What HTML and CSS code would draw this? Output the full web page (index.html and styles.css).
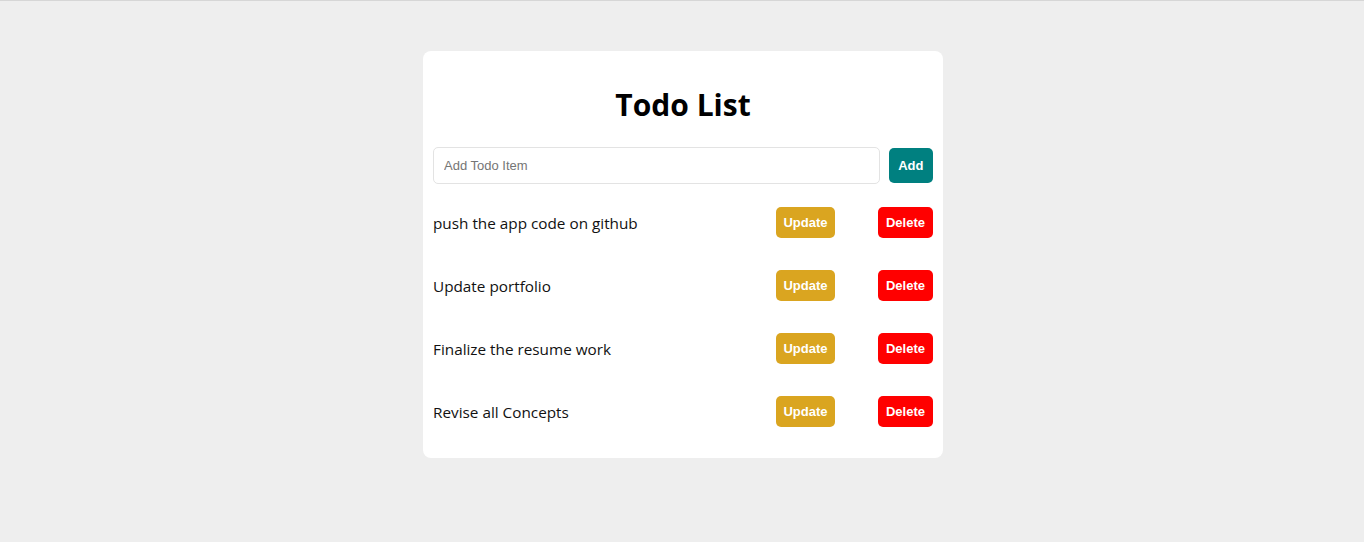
FILE: index.html
```html
<!DOCTYPE html>
<html>
<head>
<meta charset="utf-8">
<link rel="stylesheet" href="styles.css">
</head>
<body>
<div class="page">
  <div class="card">
    <h1 class="title">Todo List</h1>
    <div class="add-row">
      <input class="add-input" type="text" placeholder="Add Todo Item">
      <button class="btn btn-add">Add</button>
    </div>
    <ul class="list">
      <li class="item"><span class="item-text">push the app code on github</span><div class="actions"><button class="btn btn-update">Update</button><button class="btn btn-delete">Delete</button></div></li>
      <li class="item"><span class="item-text">Update portfolio</span><div class="actions"><button class="btn btn-update">Update</button><button class="btn btn-delete">Delete</button></div></li>
      <li class="item"><span class="item-text">Finalize the resume work</span><div class="actions"><button class="btn btn-update">Update</button><button class="btn btn-delete">Delete</button></div></li>
      <li class="item"><span class="item-text">Revise all Concepts</span><div class="actions"><button class="btn btn-update">Update</button><button class="btn btn-delete">Delete</button></div></li>
    </ul>
  </div>
</div>
</body>
</html>
```
FILE: styles.css
```css
html, body {
  margin: 0;
  padding: 0;
}
body {
  background: #eeeeee;
  border-top: 1px solid #d6d6d6;
  font-family: "Open Sans", "Noto Sans", sans-serif;
  height: 541px;
}
.page {
  display: flex;
  justify-content: center;
  padding: 50px 0 0 2px;
}
.card {
  width: 500px;
  background: #ffffff;
  border-radius: 8px;
  padding: 30px 10px 15px;
}
.title {
  margin: 0 0 19px;
  text-align: center;
  font-size: 30px;
  font-weight: 700;
  line-height: 46px;
  color: #000;
  padding-top: 1px;
}
.add-row {
  display: flex;
  align-items: center;
  gap: 9px;
}
.add-input {
  flex: 1;
  height: 37px;
  box-sizing: border-box;
  border: 1px solid #e3e3e3;
  border-radius: 5px;
  padding: 0 10px;
  font-family: "Liberation Sans", Arial, sans-serif;
  font-size: 13px;
  outline: none;
}
.add-input::placeholder {
  color: #757575;
}
.btn {
  border: none;
  border-radius: 5px;
  color: #fff;
  font-family: "Liberation Sans", Arial, sans-serif;
  font-size: 13px;
  font-weight: 700;
  line-height: 15px;
  padding: 8px 7.5px;
  cursor: pointer;
}
.btn-add {
  background: #008080;
  padding: 10px 9.5px;
}
.btn-update {
  background: #daa520;
}
.btn-delete {
  background: #ff0000;
  padding: 8px 8px;
}
.list {
  list-style: none;
  margin: 7px 0 0;
  padding: 0;
}
.item {
  display: flex;
  align-items: center;
  justify-content: space-between;
  padding: 16px 0;
}
.item-text {
  font-size: 15.3px;
  color: #111;
  padding-top: 1px;
}
.actions {
  display: flex;
  gap: 43px;
}
```
